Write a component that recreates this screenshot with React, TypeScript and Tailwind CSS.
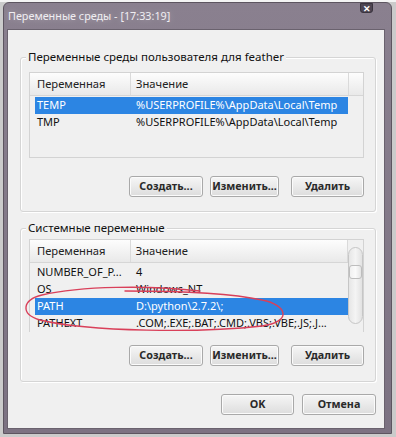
import React from "react";

const font = "font-['Noto_Sans',sans-serif]";

function Btn({ label, w, ml }: { label: string; w: string; ml: string }) {
  return (
    <div
      className={`${w} ${ml} h-[21px] flex items-center justify-center rounded-[3px] border border-[#a9a9a9] bg-gradient-to-b from-[#f6f6f6] to-[#dddddd] text-[10.8px] font-bold text-[#2a2a2a] shadow-[inset_0_0_0_1px_#fbfbfb]`}
    >
      {label}
    </div>
  );
}

function Header() {
  return (
    <div className="flex h-[23px] bg-gradient-to-b from-[#fdfdfd] to-[#e9e9e9] border-b border-[#d6d6d6] text-[11.2px] text-[#222]">
      <div className="w-[101px] border-r border-[#dadada] pl-[7px] flex items-center">Переменная</div>
      <div className="w-[218px] border-r border-[#dadada] pl-[5px] flex items-center">Значение</div>
      <div className="flex-1" />
    </div>
  );
}

function Row({ name, value, sel }: { name: string; value: string; sel?: boolean }) {
  return (
    <div className={`flex h-[17px] ml-[5px] w-[313px] items-center text-[11px] ${sel ? "bg-[#2c85e3] text-white" : "text-[#111]"}`}>
      <div className="w-[96px] pl-[2px] whitespace-nowrap overflow-hidden">{name}</div>
      <div className="flex-1 pl-[5px] whitespace-nowrap overflow-hidden">{value}</div>
    </div>
  );
}

export default function App() {
  return (
    <div className={`relative w-[396px] h-[437px] overflow-hidden bg-[#cbcbcb] ${font}`}>
      <div className="h-[2px] bg-[#f4f4f4]" />
      <div className="ml-[3px] w-[389px] h-[432px] rounded-t-[6px] bg-gradient-to-b from-[#8a808f] to-[#7c7282] border border-[#5d5560] relative">
        {/* title */}
        <div className="h-[26px] flex items-center pl-[4px] pt-[1px] text-[10.8px] text-[#f0eef2] [text-shadow:0_0_6px_rgba(255,255,255,0.35)]">
          Переменные среды - [17:33:19]
        </div>
        <div className="absolute top-0 right-[18px] w-[13px] h-[10px] rounded-b-[3px] bg-[#4d4552] border border-[#3a333e] flex items-center justify-center text-white text-[9px] leading-none font-bold">
          ✕
        </div>
        {/* client */}
        <div className="ml-[3px] w-[378px] h-[400px] bg-[#f0f0f0] border border-[#6a626e] relative">
          {/* group 1 */}
          <div className="relative mt-[27px] ml-[12px] w-[356px] h-[155px] border border-[#d5d5d5] rounded-[3px] shadow-[inset_1px_1px_0_#ffffff,1px_1px_0_#ffffff]">
            <div className="absolute -top-[9px] left-[5px] px-[2px] bg-[#f0f0f0] text-[11.5px] text-[#111] leading-[16px]">
              Переменные среды пользователя для feather
            </div>
            <div className="mt-[14px] ml-[8px] w-[335px] h-[86px] border border-[#d3d3d3] bg-[#f0f0f0]">
              <Header />
              <div className="pt-[1px]">
                <Row name="TEMP" value="%USERPROFILE%\AppData\Local\Temp" sel />
                <Row name="TMP" value="%USERPROFILE%\AppData\Local\Temp" />
              </div>
            </div>
            <div className="flex mt-[18px] ml-[108px]">
              <Btn label="Создать..." w="w-[74px]" ml="ml-0" />
              <Btn label="Изменить..." w="w-[69px]" ml="ml-[7px]" />
              <Btn label="Удалить" w="w-[73px]" ml="ml-[12px]" />
            </div>
          </div>
          {/* group 2 */}
          <div className="relative mt-[16px] ml-[12px] w-[356px] h-[154px] border border-[#d5d5d5] rounded-[3px] shadow-[inset_1px_1px_0_#ffffff,1px_1px_0_#ffffff]">
            <div className="absolute -top-[9px] left-[5px] px-[2px] bg-[#f0f0f0] text-[11.5px] text-[#111] leading-[16px]">
              Системные переменные
            </div>
            <div className="mt-[10px] ml-[8px] w-[335px] h-[93px] border border-[#d3d3d3] border-b-0 bg-[#f0f0f0] flex overflow-hidden">
              <div className="w-[318px]">
                <Header />
                <div className="pt-[1px]">
                  <Row name="NUMBER_OF_P..." value="4" />
                  <Row name="OS" value="Windows_NT" />
                  <Row name="PATH" value="D:\python\2.7.2\;" sel />
                  <Row name="PATHEXT" value=".COM;.EXE;.BAT;.CMD;.VBS;.VBE;.JS;.J..." />
                </div>
              </div>
              <div className="w-[16px] pt-[7px] flex justify-center">
                <div className="w-[15px] h-[77px] rounded-full border border-[#c6c6c6] bg-gradient-to-r from-[#e6e6e6] via-[#f4f4f4] to-[#e2e2e2] pt-[17px] flex justify-center">
                  <div className="w-[13px] h-[14px] rounded-[3px] border border-[#bdbdbd] bg-gradient-to-r from-[#f0f0f0] via-[#fafafa] to-[#e4e4e4]" />
                </div>
              </div>
            </div>
            <div className="flex mt-[13px] ml-[108px]">
              <Btn label="Создать..." w="w-[74px]" ml="ml-0" />
              <Btn label="Изменить..." w="w-[69px]" ml="ml-[7px]" />
              <Btn label="Удалить" w="w-[73px]" ml="ml-[12px]" />
            </div>
          </div>
          <div className="flex mt-[12px] ml-[213px]">
            <Btn label="OK" w="w-[73px]" ml="ml-0" />
            <Btn label="Отмена" w="w-[74px]" ml="ml-[8px]" />
          </div>
        </div>
      </div>
      {/* red hand-drawn ellipse */}
      <svg className="absolute left-0 top-0 pointer-events-none" width="396" height="437" viewBox="0 0 396 437">
        <path
          d="M200 291 C150 285 80 286 42 295 C22 300 20 314 40 320 C90 332 200 333 262 326 C292 322 288 305 262 300 C230 293 185 291 125 291"
          fill="none"
          stroke="#d9405a"
          strokeWidth="1.4"
          strokeLinecap="round"
        />
      </svg>
    </div>
  );
}
